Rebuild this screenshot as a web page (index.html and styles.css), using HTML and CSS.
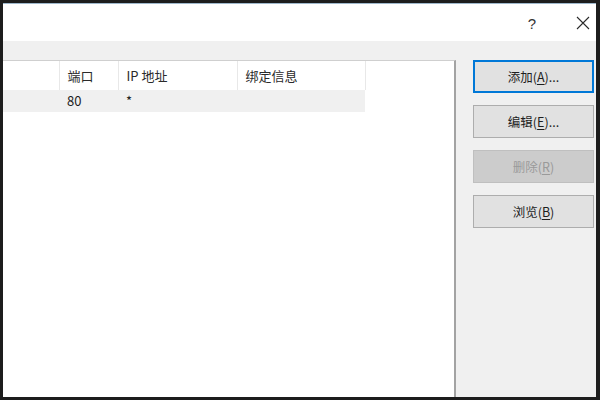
FILE: index.html
```html
<!DOCTYPE html>
<html lang="zh-CN">
<head>
    <meta charset="UTF-8">
    <title>网站绑定</title>
    <link rel="stylesheet" href="styles.css">
</head>
<body>
    <div class="window">
        <div class="titlebar">
            <span class="help">?</span>
            <span class="close">
                <svg width="14" height="14" viewBox="0 0 14 14">
                    <path d="M1 1 L13 13 M13 1 L1 13" stroke="#2b2b2b" stroke-width="1.1" fill="none"/>
                </svg>
            </span>
        </div>
        <div class="band"></div>
        <div class="content">
            <div class="list">
                <table class="bindings">
                    <colgroup>
                        <col class="c-type">
                        <col class="c-port">
                        <col class="c-ip">
                        <col class="c-info">
                    </colgroup>
                    <thead>
                        <tr>
                            <th></th>
                            <th>端口</th>
                            <th>IP 地址</th>
                            <th>绑定信息</th>
                        </tr>
                    </thead>
                    <tbody>
                        <tr class="selected">
                            <td></td>
                            <td>80</td>
                            <td>*</td>
                            <td></td>
                        </tr>
                    </tbody>
                </table>
            </div>
            <div class="side">
                <button class="btn default">添加(<u>A</u>)...</button>
                <button class="btn">编辑(<u>E</u>)...</button>
                <button class="btn" disabled>删除(<u>R</u>)</button>
                <button class="btn">浏览(<u>B</u>)</button>
            </div>
        </div>
    </div>
</body>
</html>
```

FILE: styles.css
```css
html, body {
    margin: 0;
    padding: 0;
}
body {
    width: 600px;
    height: 400px;
    overflow: hidden;
    background: #1d1d1d;
    font-family: "Noto Sans CJK SC", "Noto Sans", sans-serif;
    font-size: 13px;
    color: #1e1e1e;
}
.window {
    box-sizing: border-box;
    width: 600px;
    height: 400px;
    border-top: 3px solid #1d1d1d;
    border-left: 3px solid #1d1d1d;
    border-right: 4px solid #1d1d1d;
    border-bottom: 3px solid #1d1d1d;
    display: flex;
    flex-direction: column;
    background: #f0f0f0;
}
.titlebar {
    height: 38px;
    background: #fff;
    border-top: 1px solid #9fb8cc;
    box-sizing: border-box;
    display: flex;
    align-items: center;
    justify-content: flex-end;
    padding-right: 3px;
}
.help {
    font-family: "Liberation Sans", sans-serif;
    font-size: 15px;
    color: #333;
    margin-right: 40px;
    padding-top: 1px;
}
.close {
    display: flex;
    margin-right: 3px;
}
.band {
    height: 19px;
    background: #f0f0f0;
}
.content {
    flex: 1;
    display: flex;
}
.list {
    width: 451px;
    background: #fff;
    border-top: 1px solid #cfcfcf;
    border-right: 2px solid #a3a3a3;
}
.bindings {
    border-collapse: collapse;
    table-layout: fixed;
    width: 362px;
}
.c-type { width: 56px; }
.c-port { width: 59px; }
.c-ip { width: 119px; }
.c-info { width: 128px; }
.bindings th {
    height: 29px;
    padding: 0 0 0 8px;
    text-align: left;
    font-weight: normal;
    border-right: 1px solid #e8e8e8;
    color: #2a2a2a;
}
.bindings td {
    height: 22px;
    padding: 0 0 0 8px;
    background: #f0f0f0;
    line-height: 22px;
}
.side {
    flex: 1;
    display: flex;
    flex-direction: column;
    gap: 12px;
    padding-left: 17px;
    padding-right: 2px;
}
.btn {
    height: 33px;
    width: 121px;
    background: #e1e1e1;
    border: 1px solid #adadad;
    font-family: inherit;
    font-size: 12.5px;
    color: #1e1e1e;
    padding: 0;
}
.btn u {
    text-underline-offset: 2px;
}
.btn.default {
    border: 2px solid #0078d7;
}
.btn:disabled {
    background: #cccccc;
    border-color: #bfbfbf;
    color: #9a9a9a;
}
```
